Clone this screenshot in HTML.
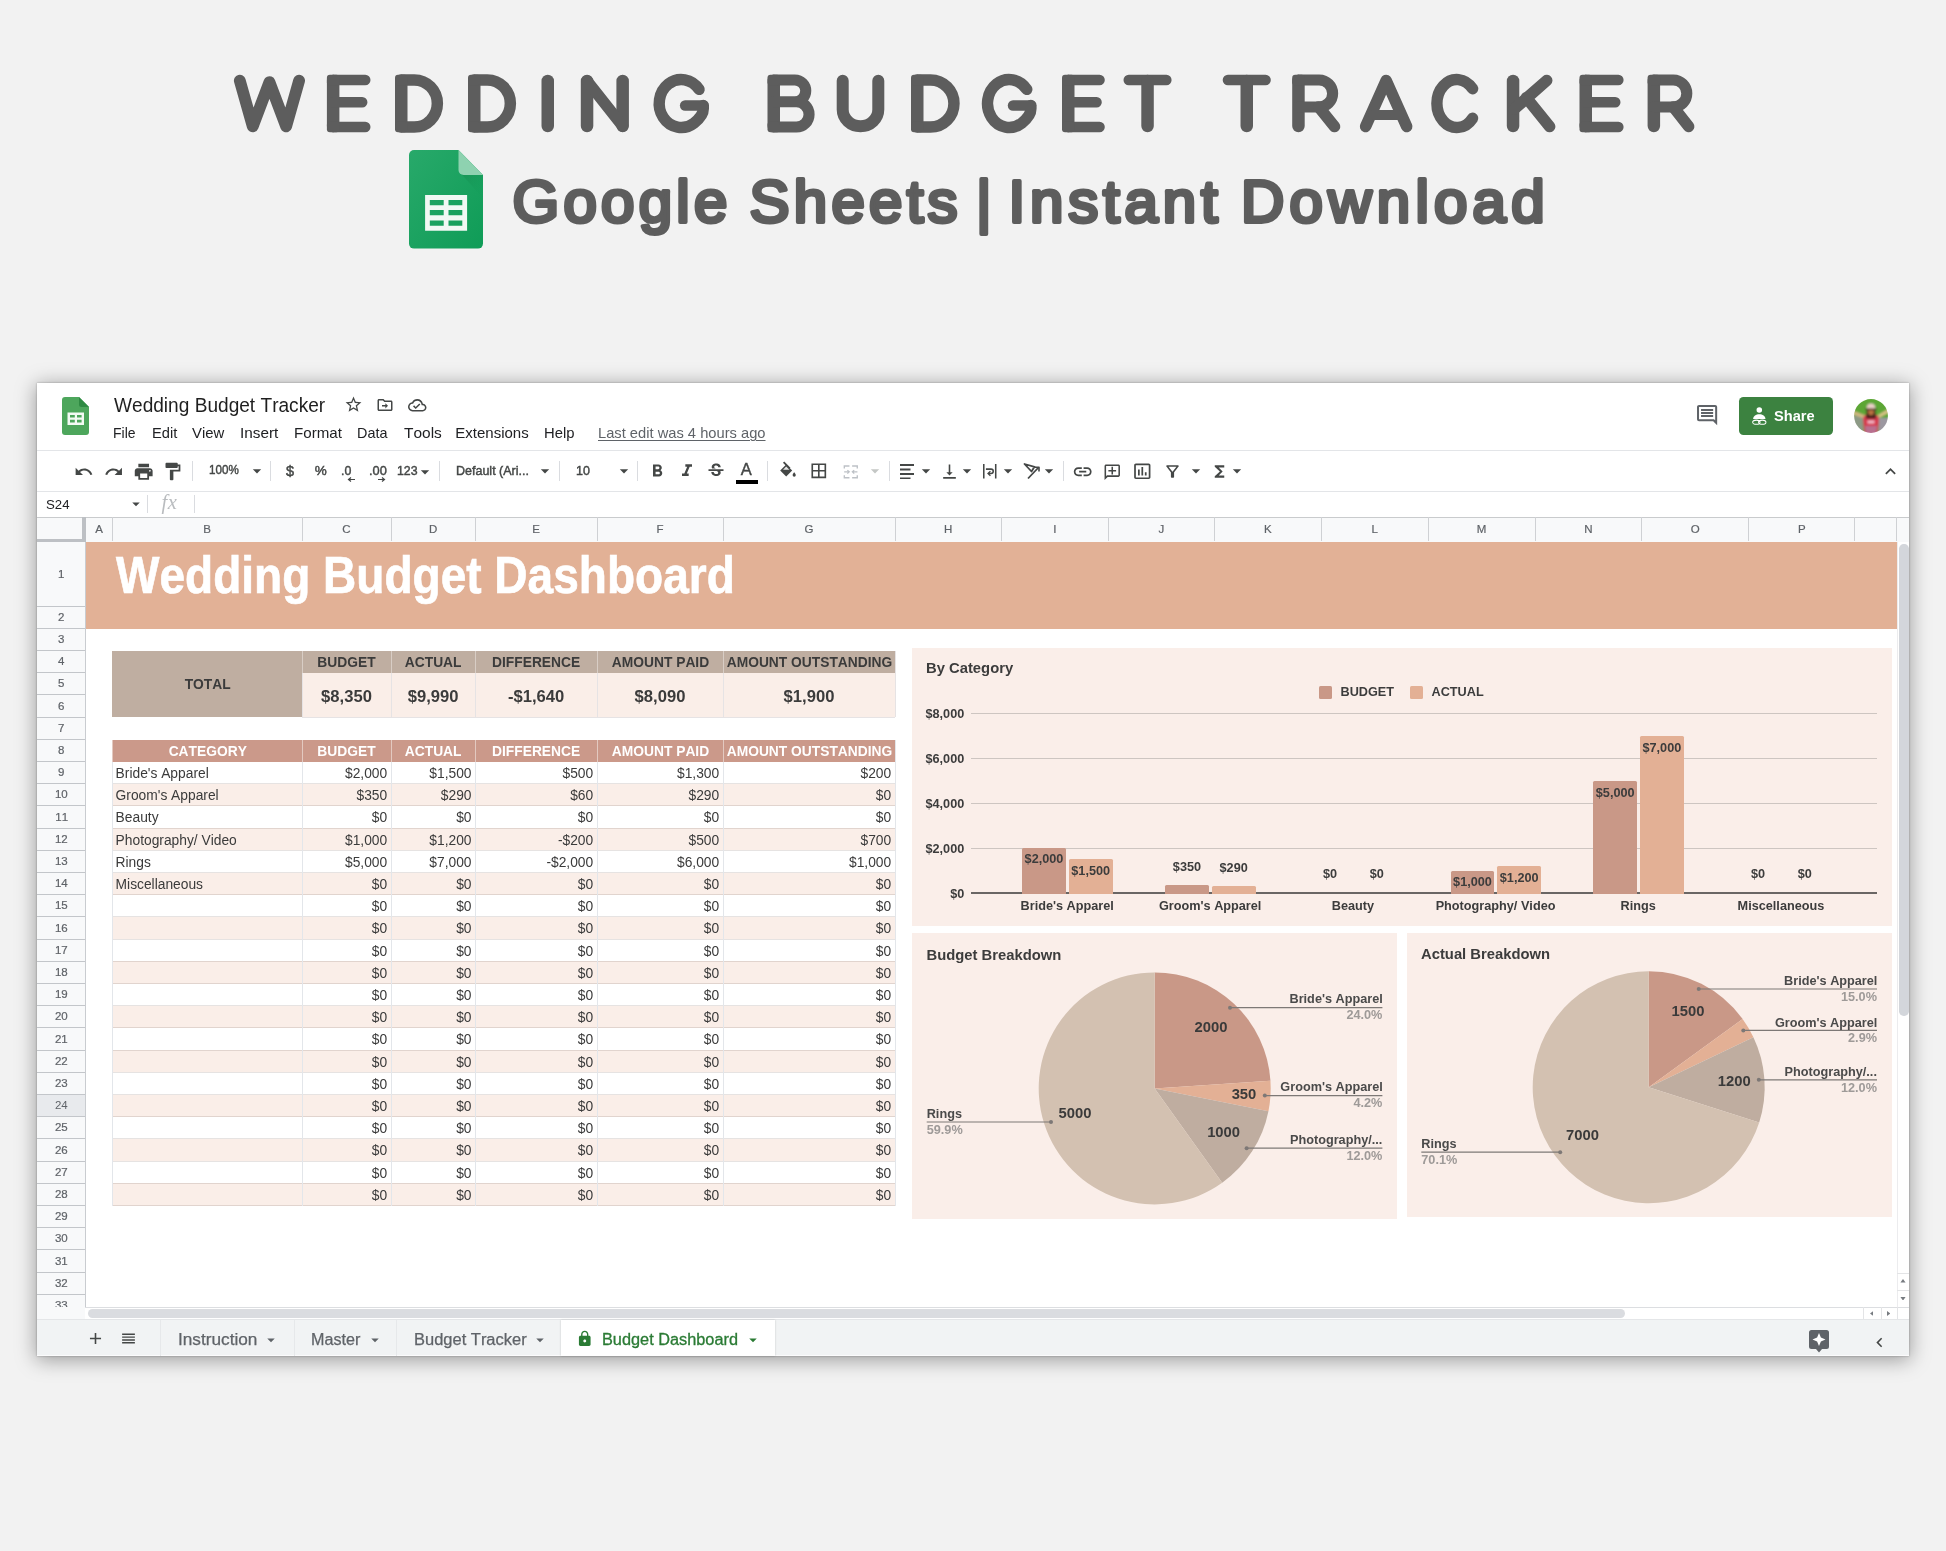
<!DOCTYPE html>
<html><head><meta charset="utf-8"><title>Wedding Budget Tracker</title>
<style>
html,body{margin:0;padding:0}
body{width:1946px;height:1551px;overflow:hidden;background:#f2f2f2;font-family:"Liberation Sans",sans-serif;}
#p{position:relative;width:1946px;height:1551px;overflow:hidden;background:#f2f2f2;will-change:transform}
#p>div,#p>i,#p>svg{position:absolute;display:block;white-space:nowrap}
#p>div{font-kerning:none}
</style></head><body><div id="p">
<svg style="left:0;top:0" width="1946" height="160" viewBox="0 0 1946 160"><g fill="none" stroke="#5d5d5d" stroke-linecap="round" stroke-linejoin="round"><g transform="translate(233.90 74.70)"><path d="M 5.90 5.90 L 18.84 51.70 L 35.55 7.40 L 52.26 51.70 L 65.20 5.90" stroke-width="11.8"/></g><g transform="translate(326.90 74.70)"><path d="M 6.25 6.25 V 51.35" stroke-width="12.5"/><path d="M 6.25 5.25 H 38.35 M 6.25 52.35 H 38.35 M 6.25 27.53 H 35.30" stroke-width="10.5"/><rect x="0.00" y="0.00" width="12.50" height="10.50" rx="3.0" fill="#5d5d5d" stroke="none"/><rect x="0.00" y="47.10" width="12.50" height="10.50" rx="3.0" fill="#5d5d5d" stroke="none"/></g><g transform="translate(395.00 74.70)"><path d="M 6.25 6.25 V 51.35" stroke-width="12.5"/><path d="M 6.25 5.25 H 19.24 A 23.11 23.55 0 0 1 19.24 52.35 H 6.25" stroke-width="11.5"/><rect x="0.00" y="0.00" width="12.50" height="10.50" rx="3.0" fill="#5d5d5d" stroke="none"/><rect x="0.00" y="47.10" width="12.50" height="10.50" rx="3.0" fill="#5d5d5d" stroke="none"/></g><g transform="translate(468.00 74.70)"><path d="M 6.25 6.25 V 51.35" stroke-width="12.5"/><path d="M 6.25 5.25 H 19.24 A 23.11 23.55 0 0 1 19.24 52.35 H 6.25" stroke-width="11.5"/><rect x="0.00" y="0.00" width="12.50" height="10.50" rx="3.0" fill="#5d5d5d" stroke="none"/><rect x="0.00" y="47.10" width="12.50" height="10.50" rx="3.0" fill="#5d5d5d" stroke="none"/></g><g transform="translate(541.50 74.70)"><path d="M 6.25 6.25 V 51.35" stroke-width="12.5"/></g><g transform="translate(580.80 74.70)"><path d="M 6.25 6.25 V 51.35 M 41.85 6.25 V 51.35" stroke-width="12.5"/><path d="M 6.25 6.25 L 41.85 51.35" stroke-width="11.5"/></g><g transform="translate(653.50 74.70)"><path d="M 45.59 14.69 A 22.05 24.00 0 1 0 40.40 48.46 Q 49.80 41.28 49.80 34.08 V 30.82" stroke-width="11.4"/><path d="M 49.80 30.82 H 31.63" stroke-width="10.5"/></g><g transform="translate(767.50 74.70)"><path d="M 6.25 6.25 V 51.35" stroke-width="12.5"/><path d="M 6.25 5.25 H 27.33 A 10.91 10.91 0 0 1 27.33 27.07 H 6.25 M 27.33 27.07 H 28.91 A 12.64 12.64 0 0 1 28.91 52.35 H 6.25" stroke-width="11.1"/><rect x="0.00" y="0.00" width="12.50" height="10.50" rx="3.0" fill="#5d5d5d" stroke="none"/><rect x="0.00" y="47.10" width="12.50" height="10.50" rx="3.0" fill="#5d5d5d" stroke="none"/></g><g transform="translate(836.70 74.70)"><path d="M 6.00 6.00 V 34.87 A 17.80 16.73 0 0 0 41.60 34.87 V 6.00" stroke-width="12.0"/></g><g transform="translate(911.00 74.70)"><path d="M 6.25 6.25 V 51.35" stroke-width="12.5"/><path d="M 6.25 5.25 H 19.48 A 23.47 23.55 0 0 1 19.48 52.35 H 6.25" stroke-width="11.5"/><rect x="0.00" y="0.00" width="12.50" height="10.50" rx="3.0" fill="#5d5d5d" stroke="none"/><rect x="0.00" y="47.10" width="12.50" height="10.50" rx="3.0" fill="#5d5d5d" stroke="none"/></g><g transform="translate(981.80 74.70)"><path d="M 44.96 14.69 A 21.70 24.00 0 1 0 39.85 48.46 Q 49.10 41.28 49.10 34.08 V 30.82" stroke-width="11.4"/><path d="M 49.10 30.82 H 31.24" stroke-width="10.5"/></g><g transform="translate(1062.00 74.70)"><path d="M 6.25 6.25 V 51.35" stroke-width="12.5"/><path d="M 6.25 5.25 H 37.55 M 6.25 52.35 H 37.55 M 6.25 27.53 H 34.55" stroke-width="10.5"/><rect x="0.00" y="0.00" width="12.50" height="10.50" rx="3.0" fill="#5d5d5d" stroke="none"/><rect x="0.00" y="47.10" width="12.50" height="10.50" rx="3.0" fill="#5d5d5d" stroke="none"/></g><g transform="translate(1123.50 74.70)"><path d="M 5.25 5.25 H 42.85" stroke-width="10.5"/><path d="M 24.05 6.25 V 51.35" stroke-width="12.5"/></g><g transform="translate(1222.70 74.70)"><path d="M 5.25 5.25 H 42.85" stroke-width="10.5"/><path d="M 24.05 6.25 V 51.35" stroke-width="12.5"/></g><g transform="translate(1292.20 74.70)"><path d="M 6.25 6.25 V 51.35" stroke-width="12.5"/><path d="M 6.25 5.25 H 26.92 A 13.50 13.50 0 0 1 26.92 32.26 H 6.25" stroke-width="11.1"/><path d="M 26.45 32.26 L 42.35 51.85" stroke-width="11.5"/><rect x="0.00" y="0.00" width="12.50" height="10.50" rx="3.0" fill="#5d5d5d" stroke="none"/></g><g transform="translate(1359.80 74.70)"><path d="M 5.80 51.80 L 26.35 5.80 L 46.90 51.80" stroke-width="11.6"/><path d="M 13.70 40.32 H 39.00" stroke-width="10.0"/></g><g transform="translate(1431.20 74.70)"><path d="M 41.37 14.02 A 19.95 24.00 0 1 0 41.37 43.58" stroke-width="11.4"/></g><g transform="translate(1506.80 74.70)"><path d="M 6.25 6.25 V 51.35" stroke-width="12.5"/><path d="M 39.93 5.75 L 7.25 34.56 M 19.44 23.04 L 42.85 51.85" stroke-width="11.5"/></g><g transform="translate(1579.50 74.70)"><path d="M 6.25 6.25 V 51.35" stroke-width="12.5"/><path d="M 6.25 5.25 H 38.85 M 6.25 52.35 H 38.85 M 6.25 27.53 H 35.76" stroke-width="10.5"/><rect x="0.00" y="0.00" width="12.50" height="10.50" rx="3.0" fill="#5d5d5d" stroke="none"/><rect x="0.00" y="47.10" width="12.50" height="10.50" rx="3.0" fill="#5d5d5d" stroke="none"/></g><g transform="translate(1647.60 74.70)"><path d="M 6.25 6.25 V 51.35" stroke-width="12.5"/><path d="M 6.25 5.25 H 25.68 A 13.50 13.50 0 0 1 25.68 32.26 H 6.25" stroke-width="11.1"/><path d="M 25.74 32.26 L 41.05 51.85" stroke-width="11.5"/><rect x="0.00" y="0.00" width="12.50" height="10.50" rx="3.0" fill="#5d5d5d" stroke="none"/></g></g></svg>
<svg style="left:0;top:150px" width="1946" height="110" viewBox="0 150 1946 110"><g font-family="Liberation Sans" font-size="60" fill="#5d5d5d" stroke="#5d5d5d" stroke-width="4" stroke-linejoin="round" stroke-linecap="round"><text x="512.50" y="221.7" textLength="214.86" lengthAdjust="spacing">Google</text><text x="749.50" y="221.7" textLength="208.04" lengthAdjust="spacing">Sheets</text><text x="976.00" y="221.7">|</text><text x="1008.50" y="221.7" textLength="209.20" lengthAdjust="spacing">Instant</text><text x="1241.00" y="221.7" textLength="303.57" lengthAdjust="spacing">Download</text></g></svg>
<svg style="left:408.90px;top:150.10px;" width="74.00" height="98.60" viewBox="0 0 74 98.6">
<defs><linearGradient id="gs" x1="0" y1="0" x2="1" y2="1"><stop offset="0" stop-color="#28a96a"/><stop offset="1" stop-color="#0f9c57"/></linearGradient>
<linearGradient id="gf" x1="0" y1="0" x2="1" y2="1"><stop offset="0" stop-color="#16864c" stop-opacity=".55"/><stop offset="1" stop-color="#0f9c57" stop-opacity="0"/></linearGradient></defs>
<path d="M5 0H49.500L74 25V93.600a5 5 0 0 1-5 5H5a5 5 0 0 1-5-5V5a5 5 0 0 1 5-5z" fill="url(#gs)"/>
<path d="M51 22.500L74 25V48z" fill="url(#gf)"/>
<path d="M49.500 0L74 25H54.500a5 5 0 0 1-5-5z" fill="#8ed2b0"/>
<path d="M16.100 45h42v35.800h-42zM20.800 49.900v5.400h13.900v-5.400zm18.700 0v5.400h13.800v-5.400zM20.800 59.900v5.400h13.900v-5.400zm18.700 0v5.400h13.800v-5.400zM20.800 70.400v5.400h13.900v-5.400zm18.700 0v5.400h13.800v-5.400z" fill="#f1f8f4" fill-rule="evenodd"/>
</svg>
<i style="left:37.00px;top:383.00px;width:1872.00px;height:973.00px;background:#fff;box-shadow:0 3px 19px 1px rgba(0,0,0,.36),0 0 2px rgba(0,0,0,.3);"></i>
<svg style="left:62.00px;top:397.00px;" width="27.00" height="38.00" viewBox="0 0 27 38"><path d="M3 0H17L27 10V35a3 3 0 0 1-3 3H3a3 3 0 0 1-3-3V3a3 3 0 0 1 3-3z" fill="#4da65c"/>
<path d="M17 0L27 10H19.500a2.500 2.500 0 0 1-2.500-2.500z" fill="#2f8a43"/>
<path d="M5.500 15.500h16.500v12.500H5.500zM8 18v2.600h4.800V18zm7 0v2.600h4.600V18zM8 22.800v2.700h4.800v-2.700zm7 0v2.700h4.600v-2.700z" fill="#f3faf4" fill-rule="evenodd"/></svg>
<div style="left:113.80px;top:395.80px;font-size:19.3px;line-height:19.3px;color:#1f1f1f;transform:scaleX(0.9902);transform-origin:0 0;">Wedding Budget Tracker</div>
<svg style="left:343.50px;top:394.60px;" width="19.00" height="19.00" viewBox="0 0 24 24"><path d="M22 9.240l-7.190-.62L12 2 9.190 8.630 2 9.240l5.460 4.730L5.820 21 12 17.270 18.180 21l-1.630-7.030L22 9.240zM12 15.400l-3.760 2.270 1-4.280-3.320-2.880 4.380-.38L12 6.100l1.710 4.040 4.380.38-3.320 2.880 1 4.280L12 15.400z" fill="#444746" /></svg>
<svg style="left:375.50px;top:396.00px;" width="18.00" height="18.00" viewBox="0 0 24 24"><path d="M20 6h-8l-2-2H4c-1.100 0-2 .9-2 2v12c0 1.100.9 2 2 2h16c1.100 0 2-.9 2-2V8c0-1.100-.9-2-2-2zm0 12H4V6h5.170l2 2H20v10zm-7.500-1.500l3.500-3.500-3.500-3.500v2.500H8v2h4.500v2.500z" fill="#444746" /></svg>
<svg style="left:408.00px;top:396.00px;" width="18.50" height="18.50" viewBox="0 0 24 24"><path d="M19.350 10.040C18.670 6.590 15.640 4 12 4 9.110 4 6.600 5.640 5.350 8.040 2.340 8.360 0 10.910 0 14c0 3.310 2.690 6 6 6h13c2.760 0 5-2.240 5-5 0-2.640-2.050-4.780-4.650-4.960zM19 18H6c-2.210 0-4-1.790-4-4 0-2.050 1.530-3.760 3.560-3.970l1.070-.11.5-.95C8.080 7.140 9.940 6 12 6c2.620 0 4.880 1.860 5.390 4.430l.3 1.500 1.530.11c1.560.1 2.780 1.410 2.780 2.960 0 1.650-1.350 3-3 3zm-9-3.820l-2.090-2.090L6.500 13.500 10 17l6.010-6.010-1.410-1.410z" fill="#444746" /></svg>
<div style="left:113.30px;top:425.16px;font-size:15px;line-height:15px;color:#202124;transform:scaleX(0.9309);transform-origin:0 0;">File</div>
<div style="left:151.50px;top:425.16px;font-size:15px;line-height:15px;color:#202124;transform:scaleX(0.9788);transform-origin:0 0;">Edit</div>
<div style="left:192.30px;top:425.16px;font-size:15px;line-height:15px;color:#202124;transform:scaleX(0.9925);transform-origin:0 0;">View</div>
<div style="left:240.00px;top:425.16px;font-size:15px;line-height:15px;color:#202124;transform:scaleX(1.0209);transform-origin:0 0;">Insert</div>
<div style="left:293.60px;top:425.16px;font-size:15px;line-height:15px;color:#202124;transform:scaleX(1.0083);transform-origin:0 0;">Format</div>
<div style="left:357.20px;top:425.16px;font-size:15px;line-height:15px;color:#202124;transform:scaleX(0.9594);transform-origin:0 0;">Data</div>
<div style="left:403.50px;top:425.16px;font-size:15px;line-height:15px;color:#202124;transform:scaleX(1.0309);transform-origin:0 0;">Tools</div>
<div style="left:455.30px;top:425.16px;font-size:15px;line-height:15px;color:#202124;">Extensions</div>
<div style="left:544.30px;top:425.16px;font-size:15px;line-height:15px;color:#202124;transform:scaleX(0.9886);transform-origin:0 0;">Help</div>
<div style="left:598.00px;top:425.16px;font-size:15px;line-height:15px;color:#5f6368;transform:scaleX(0.9799);transform-origin:0 0;text-decoration:underline;text-decoration-thickness:1px;text-underline-offset:2px;">Last edit was 4 hours ago</div>
<svg style="left:1694.50px;top:403.30px;" width="24.20" height="24.20" viewBox="0 0 24 24"><path d="M21.990 4c0-1.100-.89-2-1.990-2H4c-1.100 0-2 .9-2 2v12c0 1.100.9 2 2 2h14l4 4-.01-18zM20 4v13.170L18.830 16H4V4h16zM6 12h12v2H6zm0-3h12v2H6zm0-3h12v2H6z" fill="#5f6368" /></svg>
<i style="left:1739.10px;top:397.20px;width:94.20px;height:37.80px;background:#3c8240;border-radius:4.500px;"></i>
<svg style="left:1751.30px;top:406.30px;" width="16.60" height="19.40" viewBox="0 0 18 21"><circle cx="9" cy="4.300" r="3" fill="#fff"/><path d="M2.300 14.200c0-3.600 3.200-5.400 6.700-5.400s6.700 1.800 6.700 5.400z" fill="#fff"/>
<ellipse cx="5.800" cy="17.600" rx="4" ry="2.300" fill="none" stroke="#fff" stroke-width="1.100"/><ellipse cx="12.200" cy="17.600" rx="4" ry="2.300" fill="none" stroke="#fff" stroke-width="1.100"/></svg>
<div style="left:1774.00px;top:408.06px;font-size:15.4px;line-height:15.4px;color:#fff;font-weight:700;transform:scaleX(0.9509);transform-origin:0 0;">Share</div>
<svg style="left:1854.30px;top:399.20px;" width="34.00" height="34.00" viewBox="0 0 34 34"><defs><clipPath id="av"><circle cx="17" cy="17" r="16.900"/></clipPath><filter id="avb" x="-10%" y="-10%" width="120%" height="120%"><feGaussianBlur stdDeviation=".9"/></filter></defs>
<g clip-path="url(#av)"><g filter="url(#avb)"><rect x="-2" y="-2" width="38" height="38" fill="#5ca634"/>
<path d="M-2 17L10 17 9 36H-2z" fill="#8d9a86"/><path d="M36 19L24 19 25 36H36z" fill="#9c98a0"/>
<path d="M-1 12.800L1.500 12.500 11.500 16.500 10 19.500 -1 15.500z" fill="#d2b680"/><path d="M35 10.800L32.800 10.800 23.500 16.200 25 19 35 13.500z" fill="#d8c286"/>
<path d="M9 20c0-3.500 3-5 8-5s8 1.500 8 5l-1.500 16h-13z" fill="#d63a4e"/>
<path d="M11 27h12l-.8 9h-10.400z" fill="#b8708f"/><path d="M13.500 21.500h7v3h-7z" fill="#f0b9c8"/>
<path d="M12.800 10.500h8.400l.8 9h-10z" fill="#45201a"/>
<ellipse cx="17" cy="12.900" rx="2.900" ry="3.300" fill="#b9723f"/>
<path d="M12.600 9.800c0-3.400 1.700-5.200 4.400-5.200s4.400 1.800 4.400 5.200z" fill="#ecd0c8"/><path d="M11.500 9.600h11v1.500h-11z" fill="#3b2a22"/>
</g></g></svg>
<svg style="left:74.20px;top:462.00px;" width="19.60" height="19.60" viewBox="0 0 24 24"><path d="M12.5 8c-2.650 0-5.050.99-6.900 2.600L2 7v9h9l-3.620-3.620c1.390-1.160 3.160-1.880 5.120-1.880 3.540 0 6.550 2.310 7.600 5.500l2.370-.78C21.080 11.030 17.150 8 12.500 8z" fill="#444746" /></svg>
<svg style="left:104.20px;top:462.00px;" width="19.60" height="19.60" viewBox="0 0 24 24"><path d="M18.400 10.600C16.550 8.990 14.150 8 11.500 8c-4.650 0-8.580 3.030-9.960 7.220L3.900 16c1.050-3.190 4.050-5.500 7.600-5.500 1.950 0 3.730.72 5.120 1.880L13 16h9V7l-3.600 3.600z" fill="#444746" /></svg>
<svg style="left:132.50px;top:461.10px;" width="21.40" height="21.40" viewBox="0 0 24 24"><path d="M19 8H5c-1.660 0-3 1.340-3 3v6h4v4h12v-4h4v-6c0-1.660-1.340-3-3-3zm-3 11H8v-5h8v5zm3-7c-.55 0-1-.45-1-1s.45-1 1-1 1 .45 1 1-.45 1-1 1zm-1-9H6v4h12V3z" fill="#444746" /></svg>
<svg style="left:162.30px;top:460.80px;" width="21.00" height="21.00" viewBox="0 0 24 24"><path d="M18 4V3c0-.55-.45-1-1-1H5c-.55 0-1 .45-1 1v4c0 .55.45 1 1 1h12c.55 0 1-.45 1-1V6h1v4H9v11c0 .55.45 1 1 1h2c.55 0 1-.45 1-1v-9h8V4h-3z" fill="#444746" /></svg>
<i style="left:192.10px;top:461.00px;width:1.00px;height:20.00px;background:#dadce0;"></i>
<div style="left:209.40px;top:464.17px;font-size:12.8px;line-height:12.8px;color:#444746;transform:scaleX(0.9103);transform-origin:0 0;-webkit-text-stroke:.45px #444746;">100%</div>
<svg style="left:247.30px;top:461.30px;" width="20.00" height="20.00" viewBox="0 0 24 24"><path d="M7 10l5 5 5-5z" fill="#444746" /></svg>
<i style="left:270.20px;top:461.00px;width:1.00px;height:20.00px;background:#dadce0;"></i>
<div style="left:285.97px;top:463.71px;font-size:14.5px;line-height:14.5px;color:#444746;-webkit-text-stroke:.45px #444746;">$</div>
<div style="left:314.70px;top:464.22px;font-size:13.5px;line-height:13.5px;color:#444746;-webkit-text-stroke:.45px #444746;">%</div>
<div style="left:340.60px;top:463.72px;font-size:13.5px;line-height:13.5px;color:#444746;transform:scaleX(0.9148);transform-origin:0 0;-webkit-text-stroke:.45px #444746;">.0</div>
<svg style="left:346.50px;top:476.50px;" width="8.00" height="5.00" viewBox="0 0 8 5"><path d="M8 2.500H2M4 .5L1.500 2.500 4 4.500" stroke="#444746" stroke-width="1.200" fill="none"/></svg>
<div style="left:369.00px;top:463.72px;font-size:13.5px;line-height:13.5px;color:#444746;transform:scaleX(0.9485);transform-origin:0 0;-webkit-text-stroke:.45px #444746;">.00</div>
<svg style="left:377.50px;top:476.50px;" width="8.00" height="5.00" viewBox="0 0 8 5"><path d="M0 2.500H6M4 .5L6.500 2.500 4 4.500" stroke="#444746" stroke-width="1.200" fill="none"/></svg>
<div style="left:397.10px;top:464.32px;font-size:13.3px;line-height:13.3px;color:#444746;transform:scaleX(0.9283);transform-origin:0 0;-webkit-text-stroke:.45px #444746;">123</div>
<svg style="left:414.80px;top:461.80px;" width="20.00" height="20.00" viewBox="0 0 24 24"><path d="M7 10l5 5 5-5z" fill="#444746" /></svg>
<i style="left:438.70px;top:461.00px;width:1.00px;height:20.00px;background:#dadce0;"></i>
<div style="left:456.40px;top:464.37px;font-size:13.2px;line-height:13.2px;color:#444746;transform:scaleX(0.9478);transform-origin:0 0;-webkit-text-stroke:.45px #444746;">Default (Ari...</div>
<svg style="left:534.80px;top:461.30px;" width="20.00" height="20.00" viewBox="0 0 24 24"><path d="M7 10l5 5 5-5z" fill="#444746" /></svg>
<i style="left:559.30px;top:461.00px;width:1.00px;height:20.00px;background:#dadce0;"></i>
<div style="left:575.70px;top:463.62px;font-size:13.3px;line-height:13.3px;color:#444746;transform:scaleX(0.9396);transform-origin:0 0;-webkit-text-stroke:.45px #444746;">10</div>
<svg style="left:614.20px;top:461.30px;" width="20.00" height="20.00" viewBox="0 0 24 24"><path d="M7 10l5 5 5-5z" fill="#444746" /></svg>
<i style="left:637.20px;top:461.00px;width:1.00px;height:20.00px;background:#dadce0;"></i>
<svg style="left:646.50px;top:461.00px;" width="20.60" height="20.60" viewBox="0 0 24 24"><path d="M15.600 10.790c.97-.67 1.650-1.770 1.650-2.790 0-2.260-1.750-4-4-4H7v14h7.040c2.090 0 3.710-1.700 3.710-3.790 0-1.520-.86-2.820-2.150-3.420zM10 6.500h3c.83 0 1.500.67 1.500 1.500s-.67 1.500-1.500 1.500h-3v-3zm3.500 9H10v-3h3.500c.83 0 1.500.67 1.500 1.500s-.67 1.500-1.500 1.500z" fill="#444746" /></svg>
<svg style="left:676.50px;top:461.30px;" width="20.00" height="20.00" viewBox="0 0 24 24"><path d="M10 4v3h2.210l-3.420 8H6v3h8v-3h-2.210l3.420-8H18V4z" fill="#444746" /></svg>
<svg style="left:706.20px;top:461.30px;" width="20.00" height="20.00" viewBox="0 0 24 24"><path d="M7.240 8.750c-.26-.48-.39-1.030-.39-1.670 0-.61.13-1.160.4-1.670.26-.5.63-.93 1.110-1.290.48-.35 1.050-.63 1.700-.83.66-.19 1.390-.29 2.180-.29.81 0 1.540.11 2.210.34.66.22 1.230.54 1.690.94.47.4.83.88 1.080 1.430.25.55.38 1.150.38 1.810h-3.010c0-.31-.05-.59-.15-.85-.09-.27-.24-.49-.44-.68-.2-.19-.45-.33-.75-.44-.3-.1-.66-.16-1.060-.16-.39 0-.74.04-1.030.13-.29.09-.53.21-.72.36-.19.16-.34.34-.44.55-.1.21-.15.43-.15.66 0 .48.25.88.74 1.210.38.25.77.48 1.410.7H7.390c-.05-.08-.11-.17-.15-.25zM21 12v-2H3v2h9.620c.18.07.4.14.55.2.37.17.66.34.87.51.21.17.35.36.43.57.07.2.11.43.11.69 0 .23-.05.45-.14.66-.09.2-.23.38-.42.53-.19.15-.42.26-.71.35-.29.08-.63.13-1.010.13-.43 0-.83-.04-1.180-.13s-.66-.23-.91-.42c-.25-.19-.45-.44-.59-.75-.14-.31-.25-.76-.25-1.210H6.400c0 .55.08 1.130.24 1.580.16.45.37.85.65 1.210.28.35.6.66.98.92.37.26.78.48 1.220.65.44.17.9.3 1.380.39.48.08.96.13 1.440.13.8 0 1.530-.09 2.180-.28s1.210-.45 1.670-.79c.46-.34.82-.77 1.070-1.270s.38-1.070.38-1.710c0-.6-.1-1.140-.31-1.610-.05-.11-.11-.23-.17-.33H21z" fill="#444746" /></svg>
<div style="left:740.70px;top:460.91px;font-size:16.5px;line-height:16.5px;color:#444746;-webkit-text-stroke:.4px #444746;">A</div>
<i style="left:736.00px;top:480.20px;width:22.20px;height:3.40px;background:#000;"></i>
<i style="left:766.70px;top:461.00px;width:1.00px;height:20.00px;background:#dadce0;"></i>
<svg style="left:778.50px;top:460.50px;" width="18.00" height="17.00" viewBox="0 0 18 17"><path d="M4.600 1.200L10.800 7.400" stroke="#444746" stroke-width="1.900" fill="none"/><path d="M7.200 3.600L13.200 9.600 7.200 15.600 1.200 9.600z" fill="#444746"/><path d="M7.200 5.600L10.400 8.800H4z" fill="#fff" opacity=".85"/><path d="M15.200 11.200s-1.600 1.800-1.600 2.900a1.600 1.600 0 0 0 3.200 0c0-1.100-1.600-2.900-1.600-2.900z" fill="#444746"/></svg>
<svg style="left:809.30px;top:461.30px;" width="19.60" height="19.60" viewBox="0 0 24 24"><path d="M3 3v18h18V3H3zm8 16H5v-6h6v6zm0-8H5V5h6v6zm8 8h-6v-6h6v6zm0-8h-6V5h6v6z" fill="#444746" /></svg>
<svg style="left:842.40px;top:465.00px;" width="17.60" height="13.70" viewBox="0 0 18.500 17"><g stroke="#bdc1c6" stroke-width="1.700" fill="none"><path d="M1.200 4.300V1.200H7.600M10.900 1.200H17.300V4.300M17.300 12.700V15.800H10.900M7.600 15.800H1.200V12.700"/><path d="M1 8.500H7.300M5 6.300L7.400 8.500 5 10.700M17.500 8.500H11.200M13.500 6.300L11.100 8.500 13.500 10.700" stroke-width="1.500"/></g></svg>
<svg style="left:864.70px;top:461.30px;" width="20.00" height="20.00" viewBox="0 0 24 24"><path d="M7 10l5 5 5-5z" fill="#c4c7c5" /></svg>
<i style="left:888.50px;top:461.00px;width:1.00px;height:20.00px;background:#dadce0;"></i>
<svg style="left:899.80px;top:463.80px;" width="14.50" height="15.50" viewBox="0 0 14.500 15.500"><path d="M0 1H14.500M0 5.500H10.500M0 10H14.500M0 14.500H10.500" stroke="#444746" stroke-width="1.900" fill="none"/></svg>
<svg style="left:915.50px;top:461.30px;" width="20.00" height="20.00" viewBox="0 0 24 24"><path d="M7 10l5 5 5-5z" fill="#444746" /></svg>
<svg style="left:939.50px;top:461.60px;" width="19.00" height="19.00" viewBox="0 0 24 24"><path d="M16 13h-3V3h-2v10H8l4 4 4-4zM4 19v2h16v-2H4z" fill="#444746" /></svg>
<svg style="left:956.70px;top:461.30px;" width="20.00" height="20.00" viewBox="0 0 24 24"><path d="M7 10l5 5 5-5z" fill="#444746" /></svg>
<svg style="left:982.30px;top:464.00px;" width="15.50" height="14.50" viewBox="0 0 16 17"><g stroke="#444746" stroke-width="1.800" fill="none"><path d="M1 0V17M15 0V17"/><path d="M3.500 6H9.500a2.600 2.600 0 0 1 0 5.200H6.500"/><path d="M8.800 8.600L6 11.200 8.800 13.800" stroke-width="1.600"/></g></svg>
<svg style="left:997.70px;top:461.30px;" width="20.00" height="20.00" viewBox="0 0 24 24"><path d="M7 10l5 5 5-5z" fill="#444746" /></svg>
<svg style="left:1022.50px;top:462.00px;" width="18.00" height="18.00" viewBox="0 0 18 18"><g stroke="#444746" stroke-width="1.800" fill="none" stroke-linejoin="round"><path d="M1.500 2L8.500 9.500 11.500 4.800z"/><path d="M5 16.500L15.500 5.500"/><path d="M11.800 5.200H16V9.400" stroke-width="1.600"/></g></svg>
<svg style="left:1039.10px;top:461.30px;" width="20.00" height="20.00" viewBox="0 0 24 24"><path d="M7 10l5 5 5-5z" fill="#444746" /></svg>
<i style="left:1062.60px;top:461.00px;width:1.00px;height:20.00px;background:#dadce0;"></i>
<svg style="left:1072.00px;top:460.70px;" width="21.40" height="21.40" viewBox="0 0 24 24"><path d="M3.900 12c0-1.710 1.390-3.100 3.100-3.100h4V7H7c-2.760 0-5 2.240-5 5s2.240 5 5 5h4v-1.900H7c-1.710 0-3.100-1.390-3.100-3.100zM8 13h8v-2H8v2zm9-6h-4v1.900h4c1.710 0 3.100 1.390 3.100 3.100s-1.390 3.100-3.100 3.100h-4V17h4c2.760 0 5-2.240 5-5s-2.240-5-5-5z" fill="#444746" /></svg>
<svg style="left:1103.00px;top:462.50px;" width="18.50" height="18.50" viewBox="0 0 24 24"><path d="M2 4c0-1.100.9-2 2-2h16c1.100 0 2 .9 2 2v12c0 1.100-.9 2-2 2H6l-4 4V4zm2 13.170L5.170 16H20V4H4v13.170zM11 5h2v4h4v2h-4v4h-2v-4H7V9h4z" fill="#444746" /></svg>
<svg style="left:1131.80px;top:461.10px;" width="20.60" height="20.60" viewBox="0 0 24 24"><path d="M9 17H7v-7h2v7zm4 0h-2V7h2v10zm4 0h-2v-4h2v4zm2.500 2.100h-15V5h15v14.100zm0-16.100h-15c-1.100 0-2 .9-2 2v14c0 1.100.9 2 2 2h15c1.100 0 2-.9 2-2V5c0-1.100-.9-2-2-2z" fill="#444746" /></svg>
<svg style="left:1163.00px;top:462.00px;" width="19.00" height="19.00" viewBox="0 0 24 24"><path d="M7 6h10l-5.010 6.300L7 6zm-2.750-.39C6.270 8.200 10 13 10 13v6c0 .55.45 1 1 1h2c.55 0 1-.45 1-1v-6s3.720-4.800 5.740-7.390c.51-.66.04-1.610-.79-1.610H5.040c-.83 0-1.300.95-.79 1.610z" fill="#444746" /></svg>
<svg style="left:1185.60px;top:461.30px;" width="20.00" height="20.00" viewBox="0 0 24 24"><path d="M7 10l5 5 5-5z" fill="#444746" /></svg>
<svg style="left:1209.70px;top:461.80px;" width="19.00" height="19.00" viewBox="0 0 24 24"><path d="M18 4H6v2l6.500 6L6 18v2h12v-3h-7l5-5-5-5h7z" fill="#444746" /></svg>
<svg style="left:1227.20px;top:461.30px;" width="20.00" height="20.00" viewBox="0 0 24 24"><path d="M7 10l5 5 5-5z" fill="#444746" /></svg>
<svg style="left:1879.50px;top:461.30px;" width="21.00" height="21.00" viewBox="0 0 24 24"><path d="M7.410 15.410L12 10.830l4.590 4.580L18 14l-6-6-6 6z" fill="#444746" /></svg>
<div style="left:46.20px;top:497.92px;font-size:13.3px;line-height:13.3px;color:#202124;transform:scaleX(0.9930);transform-origin:0 0;">S24</div>
<svg style="left:126.50px;top:495.30px;" width="18.00" height="18.00" viewBox="0 0 24 24"><path d="M7 10l5 5 5-5z" fill="#444746" /></svg>
<i style="left:147.00px;top:495.00px;width:1.00px;height:18.00px;background:#dadce0;"></i>
<div style="left:161.50px;top:492.00px;font-size:20.5px;line-height:20.5px;color:#b9bcbf;font-style:italic;font-family:'Liberation Serif',serif;letter-spacing:.5px;">fx</div>
<i style="left:194.00px;top:495.00px;width:1.00px;height:18.00px;background:#dadce0;"></i>
<i style="left:37.00px;top:450.00px;width:1872.00px;height:1.00px;background:#e3e5e8;"></i>
<i style="left:37.00px;top:490.50px;width:1872.00px;height:1.00px;background:#e3e5e8;"></i>
<i style="left:37.00px;top:516.50px;width:1872.00px;height:1.00px;background:#d9dbde;"></i>
<i style="left:37.00px;top:517.00px;width:1872.00px;height:25.00px;background:#f8f9fa;"></i>
<i style="left:37.00px;top:516.80px;width:1872.00px;height:1.00px;background:#c9cbcd;"></i>
<i style="left:111.50px;top:517.00px;width:1.00px;height:24.00px;background:#cfd1d4;"></i>
<div style="left:95.16px;top:523.52px;font-size:11.5px;line-height:11.5px;color:#5f6368;-webkit-text-stroke:.2px #5f6368;">A</div>
<i style="left:301.50px;top:517.00px;width:1.00px;height:24.00px;background:#cfd1d4;"></i>
<div style="left:203.16px;top:523.52px;font-size:11.5px;line-height:11.5px;color:#5f6368;-webkit-text-stroke:.2px #5f6368;">B</div>
<i style="left:390.50px;top:517.00px;width:1.00px;height:24.00px;background:#cfd1d4;"></i>
<div style="left:342.35px;top:523.52px;font-size:11.5px;line-height:11.5px;color:#5f6368;-webkit-text-stroke:.2px #5f6368;">C</div>
<i style="left:474.80px;top:517.00px;width:1.00px;height:24.00px;background:#cfd1d4;"></i>
<div style="left:429.00px;top:523.52px;font-size:11.5px;line-height:11.5px;color:#5f6368;-webkit-text-stroke:.2px #5f6368;">D</div>
<i style="left:596.50px;top:517.00px;width:1.00px;height:24.00px;background:#cfd1d4;"></i>
<div style="left:532.31px;top:523.52px;font-size:11.5px;line-height:11.5px;color:#5f6368;-webkit-text-stroke:.2px #5f6368;">E</div>
<i style="left:722.50px;top:517.00px;width:1.00px;height:24.00px;background:#cfd1d4;"></i>
<div style="left:656.49px;top:523.52px;font-size:11.5px;line-height:11.5px;color:#5f6368;-webkit-text-stroke:.2px #5f6368;">F</div>
<i style="left:894.50px;top:517.00px;width:1.00px;height:24.00px;background:#cfd1d4;"></i>
<div style="left:804.53px;top:523.52px;font-size:11.5px;line-height:11.5px;color:#5f6368;-webkit-text-stroke:.2px #5f6368;">G</div>
<i style="left:1001.00px;top:517.00px;width:1.00px;height:24.00px;background:#cfd1d4;"></i>
<div style="left:944.10px;top:523.52px;font-size:11.5px;line-height:11.5px;color:#5f6368;-webkit-text-stroke:.2px #5f6368;">H</div>
<i style="left:1107.50px;top:517.00px;width:1.00px;height:24.00px;background:#cfd1d4;"></i>
<div style="left:1053.15px;top:523.52px;font-size:11.5px;line-height:11.5px;color:#5f6368;-webkit-text-stroke:.2px #5f6368;">I</div>
<i style="left:1214.00px;top:517.00px;width:1.00px;height:24.00px;background:#cfd1d4;"></i>
<div style="left:1158.38px;top:523.52px;font-size:11.5px;line-height:11.5px;color:#5f6368;-webkit-text-stroke:.2px #5f6368;">J</div>
<i style="left:1320.80px;top:517.00px;width:1.00px;height:24.00px;background:#cfd1d4;"></i>
<div style="left:1264.06px;top:523.52px;font-size:11.5px;line-height:11.5px;color:#5f6368;-webkit-text-stroke:.2px #5f6368;">K</div>
<i style="left:1427.80px;top:517.00px;width:1.00px;height:24.00px;background:#cfd1d4;"></i>
<div style="left:1371.60px;top:523.52px;font-size:11.5px;line-height:11.5px;color:#5f6368;-webkit-text-stroke:.2px #5f6368;">L</div>
<i style="left:1534.50px;top:517.00px;width:1.00px;height:24.00px;background:#cfd1d4;"></i>
<div style="left:1476.86px;top:523.52px;font-size:11.5px;line-height:11.5px;color:#5f6368;-webkit-text-stroke:.2px #5f6368;">M</div>
<i style="left:1641.20px;top:517.00px;width:1.00px;height:24.00px;background:#cfd1d4;"></i>
<div style="left:1584.20px;top:523.52px;font-size:11.5px;line-height:11.5px;color:#5f6368;-webkit-text-stroke:.2px #5f6368;">N</div>
<i style="left:1748.20px;top:517.00px;width:1.00px;height:24.00px;background:#cfd1d4;"></i>
<div style="left:1690.73px;top:523.52px;font-size:11.5px;line-height:11.5px;color:#5f6368;-webkit-text-stroke:.2px #5f6368;">O</div>
<i style="left:1854.30px;top:517.00px;width:1.00px;height:24.00px;background:#cfd1d4;"></i>
<div style="left:1797.91px;top:523.52px;font-size:11.5px;line-height:11.5px;color:#5f6368;-webkit-text-stroke:.2px #5f6368;">P</div>
<i style="left:1896.00px;top:517.00px;width:1.00px;height:24.00px;background:#cfd1d4;"></i>
<i style="left:37.00px;top:541.00px;width:48.00px;height:766.00px;background:#f8f9fa;"></i>
<i style="left:37.00px;top:606.00px;width:48.00px;height:1.00px;background:#c3c6ca;"></i>
<div style="left:58.10px;top:568.92px;font-size:11.5px;line-height:11.5px;color:#5f6368;-webkit-text-stroke:.2px #5f6368;">1</div>
<i style="left:37.00px;top:628.00px;width:48.00px;height:1.00px;background:#c3c6ca;"></i>
<div style="left:58.10px;top:611.90px;font-size:11.5px;line-height:11.5px;color:#5f6368;-webkit-text-stroke:.2px #5f6368;">2</div>
<i style="left:37.00px;top:650.00px;width:48.00px;height:1.00px;background:#c3c6ca;"></i>
<div style="left:58.10px;top:633.97px;font-size:11.5px;line-height:11.5px;color:#5f6368;-webkit-text-stroke:.2px #5f6368;">3</div>
<i style="left:37.00px;top:672.00px;width:48.00px;height:1.00px;background:#c3c6ca;"></i>
<div style="left:58.10px;top:656.17px;font-size:11.5px;line-height:11.5px;color:#5f6368;-webkit-text-stroke:.2px #5f6368;">4</div>
<i style="left:37.00px;top:694.00px;width:48.00px;height:1.00px;background:#c3c6ca;"></i>
<div style="left:58.10px;top:678.37px;font-size:11.5px;line-height:11.5px;color:#5f6368;-webkit-text-stroke:.2px #5f6368;">5</div>
<i style="left:37.00px;top:717.00px;width:48.00px;height:1.00px;background:#c3c6ca;"></i>
<div style="left:58.10px;top:700.57px;font-size:11.5px;line-height:11.5px;color:#5f6368;-webkit-text-stroke:.2px #5f6368;">6</div>
<i style="left:37.00px;top:739.00px;width:48.00px;height:1.00px;background:#c3c6ca;"></i>
<div style="left:58.10px;top:722.77px;font-size:11.5px;line-height:11.5px;color:#5f6368;-webkit-text-stroke:.2px #5f6368;">7</div>
<i style="left:37.00px;top:761.00px;width:48.00px;height:1.00px;background:#c3c6ca;"></i>
<div style="left:58.10px;top:744.97px;font-size:11.5px;line-height:11.5px;color:#5f6368;-webkit-text-stroke:.2px #5f6368;">8</div>
<i style="left:37.00px;top:783.00px;width:48.00px;height:1.00px;background:#c3c6ca;"></i>
<div style="left:58.10px;top:767.17px;font-size:11.5px;line-height:11.5px;color:#5f6368;-webkit-text-stroke:.2px #5f6368;">9</div>
<i style="left:37.00px;top:805.00px;width:48.00px;height:1.00px;background:#c3c6ca;"></i>
<div style="left:54.90px;top:789.37px;font-size:11.5px;line-height:11.5px;color:#5f6368;-webkit-text-stroke:.2px #5f6368;">10</div>
<i style="left:37.00px;top:828.00px;width:48.00px;height:1.00px;background:#c3c6ca;"></i>
<div style="left:55.33px;top:811.57px;font-size:11.5px;line-height:11.5px;color:#5f6368;-webkit-text-stroke:.2px #5f6368;">11</div>
<i style="left:37.00px;top:850.00px;width:48.00px;height:1.00px;background:#c3c6ca;"></i>
<div style="left:54.90px;top:833.77px;font-size:11.5px;line-height:11.5px;color:#5f6368;-webkit-text-stroke:.2px #5f6368;">12</div>
<i style="left:37.00px;top:872.00px;width:48.00px;height:1.00px;background:#c3c6ca;"></i>
<div style="left:54.90px;top:855.97px;font-size:11.5px;line-height:11.5px;color:#5f6368;-webkit-text-stroke:.2px #5f6368;">13</div>
<i style="left:37.00px;top:894.00px;width:48.00px;height:1.00px;background:#c3c6ca;"></i>
<div style="left:54.90px;top:878.17px;font-size:11.5px;line-height:11.5px;color:#5f6368;-webkit-text-stroke:.2px #5f6368;">14</div>
<i style="left:37.00px;top:916.00px;width:48.00px;height:1.00px;background:#c3c6ca;"></i>
<div style="left:54.90px;top:900.37px;font-size:11.5px;line-height:11.5px;color:#5f6368;-webkit-text-stroke:.2px #5f6368;">15</div>
<i style="left:37.00px;top:939.00px;width:48.00px;height:1.00px;background:#c3c6ca;"></i>
<div style="left:54.90px;top:922.57px;font-size:11.5px;line-height:11.5px;color:#5f6368;-webkit-text-stroke:.2px #5f6368;">16</div>
<i style="left:37.00px;top:961.00px;width:48.00px;height:1.00px;background:#c3c6ca;"></i>
<div style="left:54.90px;top:944.77px;font-size:11.5px;line-height:11.5px;color:#5f6368;-webkit-text-stroke:.2px #5f6368;">17</div>
<i style="left:37.00px;top:983.00px;width:48.00px;height:1.00px;background:#c3c6ca;"></i>
<div style="left:54.90px;top:966.97px;font-size:11.5px;line-height:11.5px;color:#5f6368;-webkit-text-stroke:.2px #5f6368;">18</div>
<i style="left:37.00px;top:1005.00px;width:48.00px;height:1.00px;background:#c3c6ca;"></i>
<div style="left:54.90px;top:989.17px;font-size:11.5px;line-height:11.5px;color:#5f6368;-webkit-text-stroke:.2px #5f6368;">19</div>
<i style="left:37.00px;top:1027.00px;width:48.00px;height:1.00px;background:#c3c6ca;"></i>
<div style="left:54.90px;top:1011.37px;font-size:11.5px;line-height:11.5px;color:#5f6368;-webkit-text-stroke:.2px #5f6368;">20</div>
<i style="left:37.00px;top:1050.00px;width:48.00px;height:1.00px;background:#c3c6ca;"></i>
<div style="left:54.90px;top:1033.57px;font-size:11.5px;line-height:11.5px;color:#5f6368;-webkit-text-stroke:.2px #5f6368;">21</div>
<i style="left:37.00px;top:1072.00px;width:48.00px;height:1.00px;background:#c3c6ca;"></i>
<div style="left:54.90px;top:1055.77px;font-size:11.5px;line-height:11.5px;color:#5f6368;-webkit-text-stroke:.2px #5f6368;">22</div>
<i style="left:37.00px;top:1094.00px;width:48.00px;height:1.00px;background:#c3c6ca;"></i>
<div style="left:54.90px;top:1077.97px;font-size:11.5px;line-height:11.5px;color:#5f6368;-webkit-text-stroke:.2px #5f6368;">23</div>
<i style="left:37.00px;top:1116.00px;width:48.00px;height:1.00px;background:#c3c6ca;"></i>
<div style="left:54.90px;top:1100.17px;font-size:11.5px;line-height:11.5px;color:#5f6368;-webkit-text-stroke:.2px #5f6368;">24</div>
<i style="left:37.00px;top:1138.00px;width:48.00px;height:1.00px;background:#c3c6ca;"></i>
<div style="left:54.90px;top:1122.37px;font-size:11.5px;line-height:11.5px;color:#5f6368;-webkit-text-stroke:.2px #5f6368;">25</div>
<i style="left:37.00px;top:1161.00px;width:48.00px;height:1.00px;background:#c3c6ca;"></i>
<div style="left:54.90px;top:1144.57px;font-size:11.5px;line-height:11.5px;color:#5f6368;-webkit-text-stroke:.2px #5f6368;">26</div>
<i style="left:37.00px;top:1183.00px;width:48.00px;height:1.00px;background:#c3c6ca;"></i>
<div style="left:54.90px;top:1166.77px;font-size:11.5px;line-height:11.5px;color:#5f6368;-webkit-text-stroke:.2px #5f6368;">27</div>
<i style="left:37.00px;top:1205.00px;width:48.00px;height:1.00px;background:#c3c6ca;"></i>
<div style="left:54.90px;top:1188.97px;font-size:11.5px;line-height:11.5px;color:#5f6368;-webkit-text-stroke:.2px #5f6368;">28</div>
<i style="left:37.00px;top:1227.00px;width:48.00px;height:1.00px;background:#c3c6ca;"></i>
<div style="left:54.90px;top:1211.17px;font-size:11.5px;line-height:11.5px;color:#5f6368;-webkit-text-stroke:.2px #5f6368;">29</div>
<i style="left:37.00px;top:1249.00px;width:48.00px;height:1.00px;background:#c3c6ca;"></i>
<div style="left:54.90px;top:1233.37px;font-size:11.5px;line-height:11.5px;color:#5f6368;-webkit-text-stroke:.2px #5f6368;">30</div>
<i style="left:37.00px;top:1272.00px;width:48.00px;height:1.00px;background:#c3c6ca;"></i>
<div style="left:54.90px;top:1255.57px;font-size:11.5px;line-height:11.5px;color:#5f6368;-webkit-text-stroke:.2px #5f6368;">31</div>
<i style="left:37.00px;top:1294.00px;width:48.00px;height:1.00px;background:#c3c6ca;"></i>
<div style="left:54.90px;top:1277.77px;font-size:11.5px;line-height:11.5px;color:#5f6368;-webkit-text-stroke:.2px #5f6368;">32</div>
<i style="left:37.00px;top:1316.00px;width:48.00px;height:1.00px;background:#c3c6ca;"></i>
<div style="left:54.90px;top:1299.97px;font-size:11.5px;line-height:11.5px;color:#5f6368;-webkit-text-stroke:.2px #5f6368;">33</div>
<i style="left:37.00px;top:1095.15px;width:47.50px;height:21.00px;background:#e8eaed;"></i>
<div style="left:54.90px;top:1100.17px;font-size:11.5px;line-height:11.5px;color:#5f6368;">24</div>
<i style="left:85.00px;top:541.00px;width:1.00px;height:766.00px;background:#c9ccd0;"></i>
<i style="left:81.50px;top:517.00px;width:4.00px;height:23.00px;background:#bdc0c4;"></i>
<i style="left:37.00px;top:538.80px;width:48.50px;height:3.60px;background:#bdc0c4;"></i>
<i style="left:86.00px;top:542.40px;width:1810.50px;height:86.40px;background:#e2b196;"></i>
<div style="left:116.00px;top:549.02px;font-size:52.3px;line-height:52.3px;color:#fff;font-weight:700;transform:scaleX(0.8801);transform-origin:0 0;-webkit-text-stroke:.7px #fff;">Wedding Budget Dashboard</div>
<i style="left:112.00px;top:651.15px;width:190.00px;height:66.00px;background:#bfaea1;"></i>
<i style="left:302.00px;top:651.15px;width:593.00px;height:21.60px;background:#bfaea1;"></i>
<i style="left:302.00px;top:672.75px;width:593.00px;height:44.40px;background:#faeee8;"></i>
<div style="left:184.64px;top:678.37px;font-size:13.8px;line-height:13.8px;color:#3b3b3b;font-weight:700;">TOTAL</div>
<div style="left:317.37px;top:656.07px;font-size:13.8px;line-height:13.8px;color:#3b3b3b;font-weight:700;">BUDGET</div>
<div style="left:321.11px;top:688.56px;font-size:16.6px;line-height:16.6px;color:#3b3b3b;font-weight:700;">$8,350</div>
<div style="left:404.79px;top:656.07px;font-size:13.8px;line-height:13.8px;color:#3b3b3b;font-weight:700;">ACTUAL</div>
<div style="left:407.76px;top:688.56px;font-size:16.6px;line-height:16.6px;color:#3b3b3b;font-weight:700;">$9,990</div>
<div style="left:492.06px;top:656.07px;font-size:13.8px;line-height:13.8px;color:#3b3b3b;font-weight:700;">DIFFERENCE</div>
<div style="left:508.00px;top:688.56px;font-size:16.6px;line-height:16.6px;color:#3b3b3b;font-weight:700;">-$1,640</div>
<div style="left:611.83px;top:656.07px;font-size:13.8px;line-height:13.8px;color:#3b3b3b;font-weight:700;">AMOUNT PAID</div>
<div style="left:634.61px;top:688.56px;font-size:16.6px;line-height:16.6px;color:#3b3b3b;font-weight:700;">$8,090</div>
<div style="left:726.72px;top:656.07px;font-size:13.8px;line-height:13.8px;color:#3b3b3b;font-weight:700;">AMOUNT OUTSTANDING</div>
<div style="left:783.61px;top:688.56px;font-size:16.6px;line-height:16.6px;color:#3b3b3b;font-weight:700;">$1,900</div>
<i style="left:301.50px;top:651.15px;width:1.00px;height:21.60px;background:#d8cdc5;"></i>
<i style="left:301.50px;top:672.75px;width:1.00px;height:44.40px;background:#e6e3e4;"></i>
<i style="left:390.50px;top:651.15px;width:1.00px;height:21.60px;background:#d8cdc5;"></i>
<i style="left:390.50px;top:672.75px;width:1.00px;height:44.40px;background:#e6e3e4;"></i>
<i style="left:474.80px;top:651.15px;width:1.00px;height:21.60px;background:#d8cdc5;"></i>
<i style="left:474.80px;top:672.75px;width:1.00px;height:44.40px;background:#e6e3e4;"></i>
<i style="left:596.50px;top:651.15px;width:1.00px;height:21.60px;background:#d8cdc5;"></i>
<i style="left:596.50px;top:672.75px;width:1.00px;height:44.40px;background:#e6e3e4;"></i>
<i style="left:722.50px;top:651.15px;width:1.00px;height:21.60px;background:#d8cdc5;"></i>
<i style="left:722.50px;top:672.75px;width:1.00px;height:44.40px;background:#e6e3e4;"></i>
<i style="left:894.50px;top:651.15px;width:1.00px;height:66.00px;background:#e6e3e4;"></i>
<i style="left:302.00px;top:716.65px;width:593.00px;height:1.00px;background:#e6e3e4;"></i>
<i style="left:112.00px;top:739.95px;width:783.00px;height:21.60px;background:#cb998a;"></i>
<div style="left:168.67px;top:744.87px;font-size:13.8px;line-height:13.8px;color:#fff;font-weight:700;">CATEGORY</div>
<div style="left:317.37px;top:744.87px;font-size:13.8px;line-height:13.8px;color:#fff;font-weight:700;">BUDGET</div>
<div style="left:404.79px;top:744.87px;font-size:13.8px;line-height:13.8px;color:#fff;font-weight:700;">ACTUAL</div>
<div style="left:492.06px;top:744.87px;font-size:13.8px;line-height:13.8px;color:#fff;font-weight:700;">DIFFERENCE</div>
<div style="left:611.83px;top:744.87px;font-size:13.8px;line-height:13.8px;color:#fff;font-weight:700;">AMOUNT PAID</div>
<div style="left:726.72px;top:744.87px;font-size:13.8px;line-height:13.8px;color:#fff;font-weight:700;">AMOUNT OUTSTANDING</div>
<div style="left:115.60px;top:766.92px;font-size:13.8px;line-height:13.8px;color:#3b3b3b;">Bride&#x27;s Apparel</div>
<div style="left:344.99px;top:766.92px;font-size:13.8px;line-height:13.8px;color:#3b3b3b;">$2,000</div>
<div style="left:429.29px;top:766.92px;font-size:13.8px;line-height:13.8px;color:#3b3b3b;">$1,500</div>
<div style="left:562.50px;top:766.92px;font-size:13.8px;line-height:13.8px;color:#3b3b3b;">$500</div>
<div style="left:676.99px;top:766.92px;font-size:13.8px;line-height:13.8px;color:#3b3b3b;">$1,300</div>
<div style="left:860.50px;top:766.92px;font-size:13.8px;line-height:13.8px;color:#3b3b3b;">$200</div>
<i style="left:112.00px;top:783.75px;width:783.00px;height:22.20px;background:#faeee8;"></i>
<div style="left:115.60px;top:789.12px;font-size:13.8px;line-height:13.8px;color:#3b3b3b;">Groom&#x27;s Apparel</div>
<div style="left:356.50px;top:789.12px;font-size:13.8px;line-height:13.8px;color:#3b3b3b;">$350</div>
<div style="left:440.80px;top:789.12px;font-size:13.8px;line-height:13.8px;color:#3b3b3b;">$290</div>
<div style="left:570.17px;top:789.12px;font-size:13.8px;line-height:13.8px;color:#3b3b3b;">$60</div>
<div style="left:688.50px;top:789.12px;font-size:13.8px;line-height:13.8px;color:#3b3b3b;">$290</div>
<div style="left:875.85px;top:789.12px;font-size:13.8px;line-height:13.8px;color:#3b3b3b;">$0</div>
<div style="left:115.60px;top:811.32px;font-size:13.8px;line-height:13.8px;color:#3b3b3b;">Beauty</div>
<div style="left:371.85px;top:811.32px;font-size:13.8px;line-height:13.8px;color:#3b3b3b;">$0</div>
<div style="left:456.15px;top:811.32px;font-size:13.8px;line-height:13.8px;color:#3b3b3b;">$0</div>
<div style="left:577.85px;top:811.32px;font-size:13.8px;line-height:13.8px;color:#3b3b3b;">$0</div>
<div style="left:703.85px;top:811.32px;font-size:13.8px;line-height:13.8px;color:#3b3b3b;">$0</div>
<div style="left:875.85px;top:811.32px;font-size:13.8px;line-height:13.8px;color:#3b3b3b;">$0</div>
<i style="left:112.00px;top:828.15px;width:783.00px;height:22.20px;background:#faeee8;"></i>
<div style="left:115.60px;top:833.52px;font-size:13.8px;line-height:13.8px;color:#3b3b3b;">Photography/ Video</div>
<div style="left:344.99px;top:833.52px;font-size:13.8px;line-height:13.8px;color:#3b3b3b;">$1,000</div>
<div style="left:429.29px;top:833.52px;font-size:13.8px;line-height:13.8px;color:#3b3b3b;">$1,200</div>
<div style="left:557.90px;top:833.52px;font-size:13.8px;line-height:13.8px;color:#3b3b3b;">-$200</div>
<div style="left:688.50px;top:833.52px;font-size:13.8px;line-height:13.8px;color:#3b3b3b;">$500</div>
<div style="left:860.50px;top:833.52px;font-size:13.8px;line-height:13.8px;color:#3b3b3b;">$700</div>
<div style="left:115.60px;top:855.72px;font-size:13.8px;line-height:13.8px;color:#3b3b3b;">Rings</div>
<div style="left:344.99px;top:855.72px;font-size:13.8px;line-height:13.8px;color:#3b3b3b;">$5,000</div>
<div style="left:429.29px;top:855.72px;font-size:13.8px;line-height:13.8px;color:#3b3b3b;">$7,000</div>
<div style="left:546.39px;top:855.72px;font-size:13.8px;line-height:13.8px;color:#3b3b3b;">-$2,000</div>
<div style="left:676.99px;top:855.72px;font-size:13.8px;line-height:13.8px;color:#3b3b3b;">$6,000</div>
<div style="left:848.99px;top:855.72px;font-size:13.8px;line-height:13.8px;color:#3b3b3b;">$1,000</div>
<i style="left:112.00px;top:872.55px;width:783.00px;height:22.20px;background:#faeee8;"></i>
<div style="left:115.60px;top:877.92px;font-size:13.8px;line-height:13.8px;color:#3b3b3b;">Miscellaneous</div>
<div style="left:371.85px;top:877.92px;font-size:13.8px;line-height:13.8px;color:#3b3b3b;">$0</div>
<div style="left:456.15px;top:877.92px;font-size:13.8px;line-height:13.8px;color:#3b3b3b;">$0</div>
<div style="left:577.85px;top:877.92px;font-size:13.8px;line-height:13.8px;color:#3b3b3b;">$0</div>
<div style="left:703.85px;top:877.92px;font-size:13.8px;line-height:13.8px;color:#3b3b3b;">$0</div>
<div style="left:875.85px;top:877.92px;font-size:13.8px;line-height:13.8px;color:#3b3b3b;">$0</div>
<div style="left:371.85px;top:900.12px;font-size:13.8px;line-height:13.8px;color:#3b3b3b;">$0</div>
<div style="left:456.15px;top:900.12px;font-size:13.8px;line-height:13.8px;color:#3b3b3b;">$0</div>
<div style="left:577.85px;top:900.12px;font-size:13.8px;line-height:13.8px;color:#3b3b3b;">$0</div>
<div style="left:703.85px;top:900.12px;font-size:13.8px;line-height:13.8px;color:#3b3b3b;">$0</div>
<div style="left:875.85px;top:900.12px;font-size:13.8px;line-height:13.8px;color:#3b3b3b;">$0</div>
<i style="left:112.00px;top:916.95px;width:783.00px;height:22.20px;background:#faeee8;"></i>
<div style="left:371.85px;top:922.32px;font-size:13.8px;line-height:13.8px;color:#3b3b3b;">$0</div>
<div style="left:456.15px;top:922.32px;font-size:13.8px;line-height:13.8px;color:#3b3b3b;">$0</div>
<div style="left:577.85px;top:922.32px;font-size:13.8px;line-height:13.8px;color:#3b3b3b;">$0</div>
<div style="left:703.85px;top:922.32px;font-size:13.8px;line-height:13.8px;color:#3b3b3b;">$0</div>
<div style="left:875.85px;top:922.32px;font-size:13.8px;line-height:13.8px;color:#3b3b3b;">$0</div>
<div style="left:371.85px;top:944.52px;font-size:13.8px;line-height:13.8px;color:#3b3b3b;">$0</div>
<div style="left:456.15px;top:944.52px;font-size:13.8px;line-height:13.8px;color:#3b3b3b;">$0</div>
<div style="left:577.85px;top:944.52px;font-size:13.8px;line-height:13.8px;color:#3b3b3b;">$0</div>
<div style="left:703.85px;top:944.52px;font-size:13.8px;line-height:13.8px;color:#3b3b3b;">$0</div>
<div style="left:875.85px;top:944.52px;font-size:13.8px;line-height:13.8px;color:#3b3b3b;">$0</div>
<i style="left:112.00px;top:961.35px;width:783.00px;height:22.20px;background:#faeee8;"></i>
<div style="left:371.85px;top:966.72px;font-size:13.8px;line-height:13.8px;color:#3b3b3b;">$0</div>
<div style="left:456.15px;top:966.72px;font-size:13.8px;line-height:13.8px;color:#3b3b3b;">$0</div>
<div style="left:577.85px;top:966.72px;font-size:13.8px;line-height:13.8px;color:#3b3b3b;">$0</div>
<div style="left:703.85px;top:966.72px;font-size:13.8px;line-height:13.8px;color:#3b3b3b;">$0</div>
<div style="left:875.85px;top:966.72px;font-size:13.8px;line-height:13.8px;color:#3b3b3b;">$0</div>
<div style="left:371.85px;top:988.92px;font-size:13.8px;line-height:13.8px;color:#3b3b3b;">$0</div>
<div style="left:456.15px;top:988.92px;font-size:13.8px;line-height:13.8px;color:#3b3b3b;">$0</div>
<div style="left:577.85px;top:988.92px;font-size:13.8px;line-height:13.8px;color:#3b3b3b;">$0</div>
<div style="left:703.85px;top:988.92px;font-size:13.8px;line-height:13.8px;color:#3b3b3b;">$0</div>
<div style="left:875.85px;top:988.92px;font-size:13.8px;line-height:13.8px;color:#3b3b3b;">$0</div>
<i style="left:112.00px;top:1005.75px;width:783.00px;height:22.20px;background:#faeee8;"></i>
<div style="left:371.85px;top:1011.12px;font-size:13.8px;line-height:13.8px;color:#3b3b3b;">$0</div>
<div style="left:456.15px;top:1011.12px;font-size:13.8px;line-height:13.8px;color:#3b3b3b;">$0</div>
<div style="left:577.85px;top:1011.12px;font-size:13.8px;line-height:13.8px;color:#3b3b3b;">$0</div>
<div style="left:703.85px;top:1011.12px;font-size:13.8px;line-height:13.8px;color:#3b3b3b;">$0</div>
<div style="left:875.85px;top:1011.12px;font-size:13.8px;line-height:13.8px;color:#3b3b3b;">$0</div>
<div style="left:371.85px;top:1033.32px;font-size:13.8px;line-height:13.8px;color:#3b3b3b;">$0</div>
<div style="left:456.15px;top:1033.32px;font-size:13.8px;line-height:13.8px;color:#3b3b3b;">$0</div>
<div style="left:577.85px;top:1033.32px;font-size:13.8px;line-height:13.8px;color:#3b3b3b;">$0</div>
<div style="left:703.85px;top:1033.32px;font-size:13.8px;line-height:13.8px;color:#3b3b3b;">$0</div>
<div style="left:875.85px;top:1033.32px;font-size:13.8px;line-height:13.8px;color:#3b3b3b;">$0</div>
<i style="left:112.00px;top:1050.15px;width:783.00px;height:22.20px;background:#faeee8;"></i>
<div style="left:371.85px;top:1055.52px;font-size:13.8px;line-height:13.8px;color:#3b3b3b;">$0</div>
<div style="left:456.15px;top:1055.52px;font-size:13.8px;line-height:13.8px;color:#3b3b3b;">$0</div>
<div style="left:577.85px;top:1055.52px;font-size:13.8px;line-height:13.8px;color:#3b3b3b;">$0</div>
<div style="left:703.85px;top:1055.52px;font-size:13.8px;line-height:13.8px;color:#3b3b3b;">$0</div>
<div style="left:875.85px;top:1055.52px;font-size:13.8px;line-height:13.8px;color:#3b3b3b;">$0</div>
<div style="left:371.85px;top:1077.72px;font-size:13.8px;line-height:13.8px;color:#3b3b3b;">$0</div>
<div style="left:456.15px;top:1077.72px;font-size:13.8px;line-height:13.8px;color:#3b3b3b;">$0</div>
<div style="left:577.85px;top:1077.72px;font-size:13.8px;line-height:13.8px;color:#3b3b3b;">$0</div>
<div style="left:703.85px;top:1077.72px;font-size:13.8px;line-height:13.8px;color:#3b3b3b;">$0</div>
<div style="left:875.85px;top:1077.72px;font-size:13.8px;line-height:13.8px;color:#3b3b3b;">$0</div>
<i style="left:112.00px;top:1094.55px;width:783.00px;height:22.20px;background:#faeee8;"></i>
<div style="left:371.85px;top:1099.92px;font-size:13.8px;line-height:13.8px;color:#3b3b3b;">$0</div>
<div style="left:456.15px;top:1099.92px;font-size:13.8px;line-height:13.8px;color:#3b3b3b;">$0</div>
<div style="left:577.85px;top:1099.92px;font-size:13.8px;line-height:13.8px;color:#3b3b3b;">$0</div>
<div style="left:703.85px;top:1099.92px;font-size:13.8px;line-height:13.8px;color:#3b3b3b;">$0</div>
<div style="left:875.85px;top:1099.92px;font-size:13.8px;line-height:13.8px;color:#3b3b3b;">$0</div>
<div style="left:371.85px;top:1122.12px;font-size:13.8px;line-height:13.8px;color:#3b3b3b;">$0</div>
<div style="left:456.15px;top:1122.12px;font-size:13.8px;line-height:13.8px;color:#3b3b3b;">$0</div>
<div style="left:577.85px;top:1122.12px;font-size:13.8px;line-height:13.8px;color:#3b3b3b;">$0</div>
<div style="left:703.85px;top:1122.12px;font-size:13.8px;line-height:13.8px;color:#3b3b3b;">$0</div>
<div style="left:875.85px;top:1122.12px;font-size:13.8px;line-height:13.8px;color:#3b3b3b;">$0</div>
<i style="left:112.00px;top:1138.95px;width:783.00px;height:22.20px;background:#faeee8;"></i>
<div style="left:371.85px;top:1144.32px;font-size:13.8px;line-height:13.8px;color:#3b3b3b;">$0</div>
<div style="left:456.15px;top:1144.32px;font-size:13.8px;line-height:13.8px;color:#3b3b3b;">$0</div>
<div style="left:577.85px;top:1144.32px;font-size:13.8px;line-height:13.8px;color:#3b3b3b;">$0</div>
<div style="left:703.85px;top:1144.32px;font-size:13.8px;line-height:13.8px;color:#3b3b3b;">$0</div>
<div style="left:875.85px;top:1144.32px;font-size:13.8px;line-height:13.8px;color:#3b3b3b;">$0</div>
<div style="left:371.85px;top:1166.52px;font-size:13.8px;line-height:13.8px;color:#3b3b3b;">$0</div>
<div style="left:456.15px;top:1166.52px;font-size:13.8px;line-height:13.8px;color:#3b3b3b;">$0</div>
<div style="left:577.85px;top:1166.52px;font-size:13.8px;line-height:13.8px;color:#3b3b3b;">$0</div>
<div style="left:703.85px;top:1166.52px;font-size:13.8px;line-height:13.8px;color:#3b3b3b;">$0</div>
<div style="left:875.85px;top:1166.52px;font-size:13.8px;line-height:13.8px;color:#3b3b3b;">$0</div>
<i style="left:112.00px;top:1183.35px;width:783.00px;height:22.20px;background:#faeee8;"></i>
<div style="left:371.85px;top:1188.72px;font-size:13.8px;line-height:13.8px;color:#3b3b3b;">$0</div>
<div style="left:456.15px;top:1188.72px;font-size:13.8px;line-height:13.8px;color:#3b3b3b;">$0</div>
<div style="left:577.85px;top:1188.72px;font-size:13.8px;line-height:13.8px;color:#3b3b3b;">$0</div>
<div style="left:703.85px;top:1188.72px;font-size:13.8px;line-height:13.8px;color:#3b3b3b;">$0</div>
<div style="left:875.85px;top:1188.72px;font-size:13.8px;line-height:13.8px;color:#3b3b3b;">$0</div>
<i style="left:112.00px;top:783.00px;width:783.00px;height:1.00px;background:rgba(60,40,30,.13);"></i>
<i style="left:112.00px;top:805.00px;width:783.00px;height:1.00px;background:rgba(60,40,30,.13);"></i>
<i style="left:112.00px;top:828.00px;width:783.00px;height:1.00px;background:rgba(60,40,30,.13);"></i>
<i style="left:112.00px;top:850.00px;width:783.00px;height:1.00px;background:rgba(60,40,30,.13);"></i>
<i style="left:112.00px;top:872.00px;width:783.00px;height:1.00px;background:rgba(60,40,30,.13);"></i>
<i style="left:112.00px;top:894.00px;width:783.00px;height:1.00px;background:rgba(60,40,30,.13);"></i>
<i style="left:112.00px;top:916.00px;width:783.00px;height:1.00px;background:rgba(60,40,30,.13);"></i>
<i style="left:112.00px;top:939.00px;width:783.00px;height:1.00px;background:rgba(60,40,30,.13);"></i>
<i style="left:112.00px;top:961.00px;width:783.00px;height:1.00px;background:rgba(60,40,30,.13);"></i>
<i style="left:112.00px;top:983.00px;width:783.00px;height:1.00px;background:rgba(60,40,30,.13);"></i>
<i style="left:112.00px;top:1005.00px;width:783.00px;height:1.00px;background:rgba(60,40,30,.13);"></i>
<i style="left:112.00px;top:1027.00px;width:783.00px;height:1.00px;background:rgba(60,40,30,.13);"></i>
<i style="left:112.00px;top:1050.00px;width:783.00px;height:1.00px;background:rgba(60,40,30,.13);"></i>
<i style="left:112.00px;top:1072.00px;width:783.00px;height:1.00px;background:rgba(60,40,30,.13);"></i>
<i style="left:112.00px;top:1094.00px;width:783.00px;height:1.00px;background:rgba(60,40,30,.13);"></i>
<i style="left:112.00px;top:1116.00px;width:783.00px;height:1.00px;background:rgba(60,40,30,.13);"></i>
<i style="left:112.00px;top:1138.00px;width:783.00px;height:1.00px;background:rgba(60,40,30,.13);"></i>
<i style="left:112.00px;top:1161.00px;width:783.00px;height:1.00px;background:rgba(60,40,30,.13);"></i>
<i style="left:112.00px;top:1183.00px;width:783.00px;height:1.00px;background:rgba(60,40,30,.13);"></i>
<i style="left:112.00px;top:1205.00px;width:783.00px;height:1.00px;background:rgba(60,40,30,.13);"></i>
<i style="left:111.50px;top:739.95px;width:1.00px;height:21.60px;background:#e3c9c0;"></i>
<i style="left:111.50px;top:761.55px;width:1.00px;height:444.00px;background:#e3e6ea;"></i>
<i style="left:301.50px;top:739.95px;width:1.00px;height:21.60px;background:#e3c9c0;"></i>
<i style="left:301.50px;top:761.55px;width:1.00px;height:444.00px;background:#e3e6ea;"></i>
<i style="left:390.50px;top:739.95px;width:1.00px;height:21.60px;background:#e3c9c0;"></i>
<i style="left:390.50px;top:761.55px;width:1.00px;height:444.00px;background:#e3e6ea;"></i>
<i style="left:474.80px;top:739.95px;width:1.00px;height:21.60px;background:#e3c9c0;"></i>
<i style="left:474.80px;top:761.55px;width:1.00px;height:444.00px;background:#e3e6ea;"></i>
<i style="left:596.50px;top:739.95px;width:1.00px;height:21.60px;background:#e3c9c0;"></i>
<i style="left:596.50px;top:761.55px;width:1.00px;height:444.00px;background:#e3e6ea;"></i>
<i style="left:722.50px;top:739.95px;width:1.00px;height:21.60px;background:#e3c9c0;"></i>
<i style="left:722.50px;top:761.55px;width:1.00px;height:444.00px;background:#e3e6ea;"></i>
<i style="left:894.50px;top:739.95px;width:1.00px;height:465.60px;background:#e3e6ea;"></i>
<i style="left:912.40px;top:647.70px;width:979.90px;height:278.60px;background:#faeee9;"></i>
<div style="left:926.00px;top:661.36px;font-size:14.8px;line-height:14.8px;color:#3c3c3c;font-weight:700;">By Category</div>
<i style="left:1319.00px;top:686.00px;width:13.00px;height:12.50px;background:#c99887;border-radius:1.5px;"></i>
<div style="left:1340.50px;top:685.92px;font-size:12.7px;line-height:12.7px;color:#3c3c3c;font-weight:700;">BUDGET</div>
<i style="left:1410.00px;top:686.00px;width:13.00px;height:12.50px;background:#e3b095;border-radius:1.5px;"></i>
<div style="left:1431.50px;top:685.92px;font-size:12.7px;line-height:12.7px;color:#3c3c3c;font-weight:700;">ACTUAL</div>
<i style="left:971.00px;top:712.60px;width:906.40px;height:1.20px;background:#cdc5c1;"></i>
<div style="left:925.45px;top:707.82px;font-size:12.7px;line-height:12.7px;color:#3c3c3c;font-weight:700;">$8,000</div>
<i style="left:971.00px;top:758.00px;width:906.40px;height:1.20px;background:#cdc5c1;"></i>
<div style="left:925.45px;top:753.22px;font-size:12.7px;line-height:12.7px;color:#3c3c3c;font-weight:700;">$6,000</div>
<i style="left:971.00px;top:802.80px;width:906.40px;height:1.20px;background:#cdc5c1;"></i>
<div style="left:925.45px;top:798.02px;font-size:12.7px;line-height:12.7px;color:#3c3c3c;font-weight:700;">$4,000</div>
<i style="left:971.00px;top:847.70px;width:906.40px;height:1.20px;background:#cdc5c1;"></i>
<div style="left:925.45px;top:842.92px;font-size:12.7px;line-height:12.7px;color:#3c3c3c;font-weight:700;">$2,000</div>
<div style="left:950.17px;top:887.62px;font-size:12.7px;line-height:12.7px;color:#3c3c3c;font-weight:700;">$0</div>
<i style="left:971.00px;top:892.00px;width:906.40px;height:2.00px;background:#6a6664;"></i>
<i style="left:1022.10px;top:848.05px;width:43.80px;height:45.75px;background:#c99887;border-radius:1.5px 1.5px 0 0;"></i>
<div style="left:1024.58px;top:853.42px;font-size:12.7px;line-height:12.7px;color:#3c3c3c;font-weight:700;">$2,000</div>
<i style="left:1068.80px;top:859.29px;width:43.80px;height:34.51px;background:#e3b095;border-radius:1.5px 1.5px 0 0;"></i>
<div style="left:1071.28px;top:864.92px;font-size:12.7px;line-height:12.7px;color:#3c3c3c;font-weight:700;">$1,500</div>
<div style="left:1020.56px;top:899.82px;font-size:12.7px;line-height:12.7px;color:#3c3c3c;font-weight:700;">Bride&#x27;s Apparel</div>
<i style="left:1165.10px;top:885.13px;width:43.80px;height:8.67px;background:#c99887;border-radius:1.5px 1.5px 0 0;"></i>
<div style="left:1172.87px;top:860.92px;font-size:12.7px;line-height:12.7px;color:#3c3c3c;font-weight:700;">$350</div>
<i style="left:1211.80px;top:886.48px;width:43.80px;height:7.32px;background:#e3b095;border-radius:1.5px 1.5px 0 0;"></i>
<div style="left:1219.57px;top:861.92px;font-size:12.7px;line-height:12.7px;color:#3c3c3c;font-weight:700;">$290</div>
<div style="left:1158.97px;top:899.82px;font-size:12.7px;line-height:12.7px;color:#3c3c3c;font-weight:700;">Groom&#x27;s Apparel</div>
<div style="left:1322.94px;top:868.42px;font-size:12.7px;line-height:12.7px;color:#3c3c3c;font-weight:700;">$0</div>
<div style="left:1369.64px;top:868.42px;font-size:12.7px;line-height:12.7px;color:#3c3c3c;font-weight:700;">$0</div>
<div style="left:1331.83px;top:899.82px;font-size:12.7px;line-height:12.7px;color:#3c3c3c;font-weight:700;">Beauty</div>
<i style="left:1450.60px;top:870.52px;width:43.80px;height:23.27px;background:#c99887;border-radius:1.5px 1.5px 0 0;"></i>
<div style="left:1453.08px;top:875.72px;font-size:12.7px;line-height:12.7px;color:#3c3c3c;font-weight:700;">$1,000</div>
<i style="left:1497.30px;top:866.03px;width:43.80px;height:27.77px;background:#e3b095;border-radius:1.5px 1.5px 0 0;"></i>
<div style="left:1499.78px;top:871.92px;font-size:12.7px;line-height:12.7px;color:#3c3c3c;font-weight:700;">$1,200</div>
<div style="left:1435.64px;top:899.82px;font-size:12.7px;line-height:12.7px;color:#3c3c3c;font-weight:700;">Photography/ Video</div>
<i style="left:1593.30px;top:780.62px;width:43.80px;height:113.17px;background:#c99887;border-radius:1.5px 1.5px 0 0;"></i>
<div style="left:1595.78px;top:786.72px;font-size:12.7px;line-height:12.7px;color:#3c3c3c;font-weight:700;">$5,000</div>
<i style="left:1640.00px;top:735.68px;width:43.80px;height:158.12px;background:#e3b095;border-radius:1.5px 1.5px 0 0;"></i>
<div style="left:1642.48px;top:741.72px;font-size:12.7px;line-height:12.7px;color:#3c3c3c;font-weight:700;">$7,000</div>
<div style="left:1620.56px;top:899.82px;font-size:12.7px;line-height:12.7px;color:#3c3c3c;font-weight:700;">Rings</div>
<div style="left:1750.94px;top:868.42px;font-size:12.7px;line-height:12.7px;color:#3c3c3c;font-weight:700;">$0</div>
<div style="left:1797.64px;top:868.42px;font-size:12.7px;line-height:12.7px;color:#3c3c3c;font-weight:700;">$0</div>
<div style="left:1737.59px;top:899.82px;font-size:12.7px;line-height:12.7px;color:#3c3c3c;font-weight:700;">Miscellaneous</div>
<i style="left:912.00px;top:933.40px;width:485.00px;height:285.20px;background:#faeee9;"></i>
<div style="left:926.50px;top:948.06px;font-size:14.8px;line-height:14.8px;color:#3c3c3c;font-weight:700;">Budget Breakdown</div>
<i style="left:1406.60px;top:932.80px;width:485.20px;height:284.60px;background:#faeee9;"></i>
<div style="left:1421.00px;top:947.06px;font-size:14.8px;line-height:14.8px;color:#3c3c3c;font-weight:700;">Actual Breakdown</div>
<svg style="left:0;top:0" width="1946" height="1551" viewBox="0 0 1946 1551"><path d="M1154.70 1088.40L1154.70 972.40A116 116 0 0 1 1270.45 1080.77Z" fill="#c99887"/><path d="M1154.70 1088.40L1270.45 1080.77A116 116 0 0 1 1268.44 1111.16Z" fill="#e3b095"/><path d="M1154.70 1088.40L1268.44 1111.16A116 116 0 0 1 1222.17 1182.76Z" fill="#bfada0"/><path d="M1154.70 1088.40L1222.17 1182.76A116 116 0 1 1 1154.70 972.40Z" fill="#d3c1b1"/><path d="M1648.70 1087.20L1648.70 971.20A116 116 0 0 1 1742.61 1019.11Z" fill="#c99887"/><path d="M1648.70 1087.20L1742.61 1019.11A116 116 0 0 1 1753.40 1037.27Z" fill="#e3b095"/><path d="M1648.70 1087.20L1753.40 1037.27A116 116 0 0 1 1759.18 1122.56Z" fill="#bfada0"/><path d="M1648.70 1087.20L1759.18 1122.56A116 116 0 1 1 1648.70 971.20Z" fill="#d3c1b1"/><path d="M1230.0 1007.7H1382.4" stroke="#7d7876" stroke-width="1.2" fill="none"/><circle cx="1230.0" cy="1007.7" r="2" fill="#7d7876"/><path d="M1264.8 1095.6H1382.4" stroke="#7d7876" stroke-width="1.2" fill="none"/><circle cx="1264.8" cy="1095.6" r="2" fill="#7d7876"/><path d="M1246.6 1148.2H1382.4" stroke="#7d7876" stroke-width="1.2" fill="none"/><circle cx="1246.6" cy="1148.2" r="2" fill="#7d7876"/><path d="M926.7 1122.0H1051.0" stroke="#7d7876" stroke-width="1.2" fill="none"/><circle cx="1051.0" cy="1122.0" r="2" fill="#7d7876"/><path d="M1698.7 989.0H1877.0" stroke="#7d7876" stroke-width="1.2" fill="none"/><circle cx="1698.7" cy="989.0" r="2" fill="#7d7876"/><path d="M1743.3 1030.4H1877.0" stroke="#7d7876" stroke-width="1.2" fill="none"/><circle cx="1743.3" cy="1030.4" r="2" fill="#7d7876"/><path d="M1758.8 1079.8H1877.0" stroke="#7d7876" stroke-width="1.2" fill="none"/><circle cx="1758.8" cy="1079.8" r="2" fill="#7d7876"/><path d="M1421.3 1152.2H1560.2" stroke="#7d7876" stroke-width="1.2" fill="none"/><circle cx="1560.2" cy="1152.2" r="2" fill="#7d7876"/></svg>
<div style="left:1289.51px;top:993.22px;font-size:12.7px;line-height:12.7px;color:#4a4a4a;font-weight:700;">Bride&#x27;s Apparel</div>
<div style="left:1346.39px;top:1009.02px;font-size:12.7px;line-height:12.7px;color:#9e9a98;font-weight:700;">24.0%</div>
<div style="left:1280.35px;top:1080.92px;font-size:12.7px;line-height:12.7px;color:#4a4a4a;font-weight:700;">Groom&#x27;s Apparel</div>
<div style="left:1353.45px;top:1096.92px;font-size:12.7px;line-height:12.7px;color:#9e9a98;font-weight:700;">4.2%</div>
<div style="left:1289.97px;top:1133.82px;font-size:12.7px;line-height:12.7px;color:#4a4a4a;font-weight:700;">Photography/...</div>
<div style="left:1346.39px;top:1149.62px;font-size:12.7px;line-height:12.7px;color:#9e9a98;font-weight:700;">12.0%</div>
<div style="left:926.70px;top:1107.62px;font-size:12.7px;line-height:12.7px;color:#4a4a4a;font-weight:700;">Rings</div>
<div style="left:926.70px;top:1124.22px;font-size:12.7px;line-height:12.7px;color:#9e9a98;font-weight:700;">59.9%</div>
<div style="left:1784.11px;top:974.82px;font-size:12.7px;line-height:12.7px;color:#4a4a4a;font-weight:700;">Bride&#x27;s Apparel</div>
<div style="left:1840.99px;top:990.82px;font-size:12.7px;line-height:12.7px;color:#9e9a98;font-weight:700;">15.0%</div>
<div style="left:1774.95px;top:1016.52px;font-size:12.7px;line-height:12.7px;color:#4a4a4a;font-weight:700;">Groom&#x27;s Apparel</div>
<div style="left:1848.05px;top:1032.32px;font-size:12.7px;line-height:12.7px;color:#9e9a98;font-weight:700;">2.9%</div>
<div style="left:1784.57px;top:1065.62px;font-size:12.7px;line-height:12.7px;color:#4a4a4a;font-weight:700;">Photography/...</div>
<div style="left:1840.99px;top:1081.72px;font-size:12.7px;line-height:12.7px;color:#9e9a98;font-weight:700;">12.0%</div>
<div style="left:1421.30px;top:1137.82px;font-size:12.7px;line-height:12.7px;color:#4a4a4a;font-weight:700;">Rings</div>
<div style="left:1421.30px;top:1154.12px;font-size:12.7px;line-height:12.7px;color:#9e9a98;font-weight:700;">70.1%</div>
<div style="left:1194.54px;top:1020.26px;font-size:14.8px;line-height:14.8px;color:#3a3a3a;font-weight:700;">2000</div>
<div style="left:1231.65px;top:1086.56px;font-size:14.8px;line-height:14.8px;color:#3a3a3a;font-weight:700;">350</div>
<div style="left:1207.14px;top:1125.26px;font-size:14.8px;line-height:14.8px;color:#3a3a3a;font-weight:700;">1000</div>
<div style="left:1058.54px;top:1106.06px;font-size:14.8px;line-height:14.8px;color:#3a3a3a;font-weight:700;">5000</div>
<div style="left:1671.54px;top:1003.66px;font-size:14.8px;line-height:14.8px;color:#3a3a3a;font-weight:700;">1500</div>
<div style="left:1717.74px;top:1073.96px;font-size:14.8px;line-height:14.8px;color:#3a3a3a;font-weight:700;">1200</div>
<div style="left:1565.94px;top:1128.26px;font-size:14.8px;line-height:14.8px;color:#3a3a3a;font-weight:700;">7000</div>
<i style="left:1896.50px;top:542.00px;width:12.50px;height:777.50px;background:#fff;"></i>
<i style="left:1896.50px;top:542.00px;width:1.00px;height:777.50px;background:#ececee;"></i>
<i style="left:1899.30px;top:543.80px;width:9.50px;height:472.00px;background:#d3d6db;border-radius:4.700px;"></i>
<i style="left:37.00px;top:1307.00px;width:1872.00px;height:12.50px;background:#fff;"></i>
<i style="left:37.00px;top:1306.50px;width:1872.00px;height:1.00px;background:#dcdee1;"></i>
<i style="left:37.00px;top:1307.00px;width:48.00px;height:12.50px;background:#f8f9fa;"></i>
<i style="left:88.40px;top:1308.60px;width:1537.00px;height:9.40px;background:#dadce0;border-radius:4.700px;"></i>
<i style="left:1863.00px;top:1307.00px;width:1.00px;height:12.50px;background:#e3e4e6;"></i>
<i style="left:1880.50px;top:1307.00px;width:1.00px;height:12.50px;background:#e3e4e6;"></i>
<i style="left:1896.50px;top:1307.00px;width:1.00px;height:12.50px;background:#e3e4e6;"></i>
<svg style="left:1869.50px;top:1311.00px;" width="3.50" height="5.00" viewBox="0 0 3.500 5"><path d="M3.500 0V5L0 2.500z" fill="#777b80"/></svg>
<svg style="left:1886.50px;top:1311.00px;" width="3.50" height="5.00" viewBox="0 0 3.500 5"><path d="M0 0V5L3.500 2.500z" fill="#777b80"/></svg>
<i style="left:1896.50px;top:1273.00px;width:12.50px;height:1.00px;background:#e3e4e6;"></i>
<i style="left:1896.50px;top:1289.50px;width:12.50px;height:1.00px;background:#e3e4e6;"></i>
<svg style="left:1900.30px;top:1279.40px;" width="6.00" height="3.60" viewBox="0 0 5 3.500"><path d="M0 3.500H5L2.500 0z" fill="#777b80"/></svg>
<svg style="left:1900.30px;top:1296.60px;" width="6.00" height="3.60" viewBox="0 0 5 3.500"><path d="M0 0H5L2.500 3.500z" fill="#777b80"/></svg>
<i style="left:37.00px;top:1319.50px;width:1872.00px;height:36.50px;background:#f1f3f4;"></i>
<i style="left:37.00px;top:1319.00px;width:1872.00px;height:1.00px;background:#e4e6e8;"></i>
<i style="left:37.00px;top:1355.00px;width:1872.00px;height:1.00px;background:#fbfbfc;"></i>
<svg style="left:86.00px;top:1329.00px;" width="19.00" height="19.00" viewBox="0 0 24 24"><path d="M19 13h-6v6h-2v-6H5v-2h6V5h2v6h6v2z" fill="#444746" /></svg>
<svg style="left:119.80px;top:1330.00px;" width="17.00" height="17.00" viewBox="0 0 24 24"><path d="M3 15h18v-2H3v2zm0 4h18v-2H3v2zm0-8h18V9H3v2zm0-6v2h18V5H3z" fill="#444746" /></svg>
<i style="left:159.80px;top:1320.00px;width:1.00px;height:36.00px;background:#e6e8ea;"></i>
<i style="left:293.50px;top:1320.00px;width:1.00px;height:36.00px;background:#e6e8ea;"></i>
<i style="left:396.20px;top:1320.00px;width:1.00px;height:36.00px;background:#e6e8ea;"></i>
<i style="left:561.00px;top:1319.50px;width:214.00px;height:36.50px;background:#fff;box-shadow:0 0 2px rgba(0,0,0,.18);"></i>
<div style="left:177.60px;top:1332.16px;font-size:15.6px;line-height:15.6px;color:#5f6368;transform:scaleX(1.1033);transform-origin:0 0;-webkit-text-stroke:.25px #5f6368;">Instruction</div>
<svg style="left:262.30px;top:1331.30px;" width="18.00" height="18.00" viewBox="0 0 24 24"><path d="M7 10l5 5 5-5z" fill="#5f6368" /></svg>
<div style="left:311.20px;top:1332.16px;font-size:15.6px;line-height:15.6px;color:#5f6368;transform:scaleX(1.0340);transform-origin:0 0;-webkit-text-stroke:.25px #5f6368;">Master</div>
<svg style="left:366.00px;top:1331.30px;" width="18.00" height="18.00" viewBox="0 0 24 24"><path d="M7 10l5 5 5-5z" fill="#5f6368" /></svg>
<div style="left:414.40px;top:1332.16px;font-size:15.6px;line-height:15.6px;color:#5f6368;transform:scaleX(1.0568);transform-origin:0 0;-webkit-text-stroke:.25px #5f6368;">Budget Tracker</div>
<svg style="left:531.20px;top:1331.30px;" width="18.00" height="18.00" viewBox="0 0 24 24"><path d="M7 10l5 5 5-5z" fill="#5f6368" /></svg>
<svg style="left:576.00px;top:1330.00px;" width="17.50" height="17.50" viewBox="0 0 24 24"><path d="M18 8h-1V6c0-2.760-2.240-5-5-5S7 3.240 7 6v2H6c-1.100 0-2 .9-2 2v10c0 1.100.9 2 2 2h12c1.100 0 2-.9 2-2V10c0-1.100-.9-2-2-2zm-6 9c-1.100 0-2-.9-2-2s.9-2 2-2 2 .9 2 2-.9 2-2 2zm3.100-9H8.900V6c0-1.710 1.390-3.100 3.100-3.100 1.710 0 3.100 1.390 3.100 3.100v2z" fill="#2a7b34" /></svg>
<div style="left:602.30px;top:1332.16px;font-size:15.6px;line-height:15.6px;color:#2a7b34;transform:scaleX(1.0454);transform-origin:0 0;-webkit-text-stroke:.3px #2a7b34;">Budget Dashboard</div>
<svg style="left:743.70px;top:1331.30px;" width="18.00" height="18.00" viewBox="0 0 24 24"><path d="M7 10l5 5 5-5z" fill="#2a7b34" /></svg>
<svg style="left:1809.00px;top:1329.50px;" width="20.00" height="23.00" viewBox="0 0 20 23"><path d="M2.500 0H17.500A2.500 2.500 0 0 1 20 2.500V16.500A2.500 2.500 0 0 1 17.500 19H13L10 22.500 7 19H2.500A2.500 2.500 0 0 1 0 16.500V2.500A2.500 2.500 0 0 1 2.500 0z" fill="#5f6368"/>
<path d="M10 3L11.900 7.600 16.500 9.500 11.900 11.400 10 16 8.100 11.400 3.500 9.500 8.100 7.600z" fill="#fff"/></svg>
<svg style="left:1870.20px;top:1332.50px;" width="19.00" height="19.00" viewBox="0 0 24 24"><path d="M15.410 7.410L14 6l-6 6 6 6 1.410-1.410L10.830 12z" fill="#444746" /></svg>
</div></body></html>
